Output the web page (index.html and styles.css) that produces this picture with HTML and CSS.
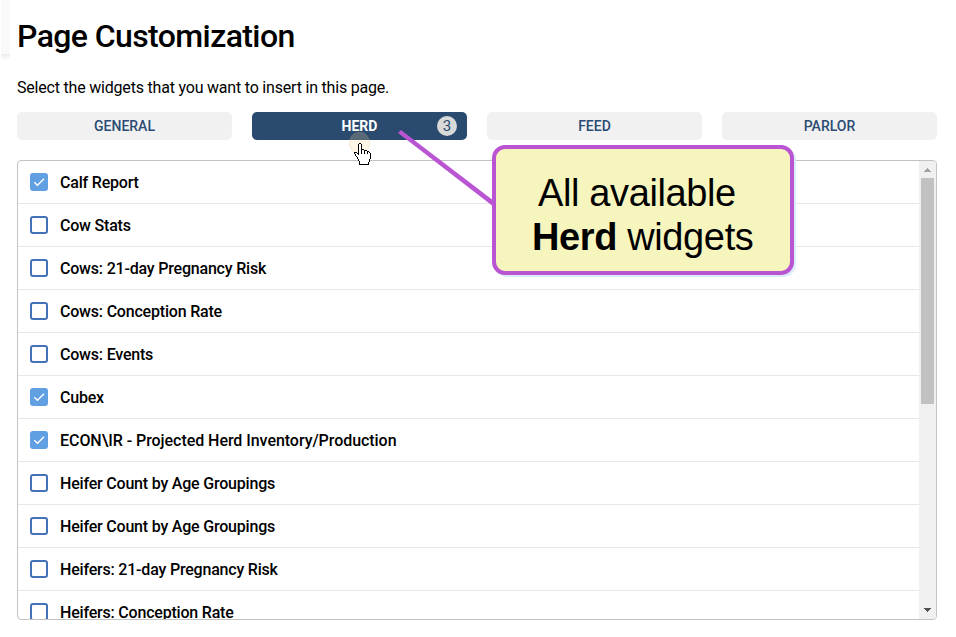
FILE: index.html
```html
<!DOCTYPE html>
<html lang="en">

<head>
  <meta charset="UTF-8" />
  <meta name="viewport" content="width=device-width, initial-scale=1.0" />
  <title>Page Customization</title>
  <link rel="stylesheet" href="styles.css">
</head>

<body>
  <div class="page-edge"></div>

  <main class="customization">
    <h1>Page Customization</h1>
    <p class="intro">Select the widgets that you want to insert in this page.</p>

    <nav class="tabs">
      <button type="button" class="tab">GENERAL</button>
      <button type="button" class="tab active">HERD<span class="count">3</span></button>
      <button type="button" class="tab">FEED</button>
      <button type="button" class="tab">PARLOR</button>
    </nav>

    <div class="widget-list">
      <div class="rows">
        <label class="row"><input type="checkbox" checked /><span>Calf Report</span></label>
        <label class="row"><input type="checkbox" /><span>Cow Stats</span></label>
        <label class="row"><input type="checkbox" /><span>Cows: 21-day Pregnancy Risk</span></label>
        <label class="row"><input type="checkbox" /><span>Cows: Conception Rate</span></label>
        <label class="row"><input type="checkbox" /><span>Cows: Events</span></label>
        <label class="row"><input type="checkbox" checked /><span>Cubex</span></label>
        <label class="row"><input type="checkbox" checked /><span class="wide">ECON\IR - Projected Herd Inventory/Production</span></label>
        <label class="row"><input type="checkbox" /><span>Heifer Count by Age Groupings</span></label>
        <label class="row"><input type="checkbox" /><span>Heifer Count by Age Groupings</span></label>
        <label class="row"><input type="checkbox" /><span>Heifers: 21-day Pregnancy Risk</span></label>
        <label class="row"><input type="checkbox" /><span>Heifers: Conception Rate</span></label>
      </div>
      <div class="scrollbar">
        <svg class="arrow up" width="7" height="4" viewBox="0 0 7 4"><path d="M3 0h1v1h1v1h1v1h1v1H0V3h1V2h1V1h1z" /></svg>
        <div class="thumb"></div>
        <svg class="arrow down" width="7" height="4" viewBox="0 0 7 4"><path d="M0 0h7v1H6v1H5v1H4v1H3V3H2V2H1V1H0z" /></svg>
      </div>
    </div>
  </main>

  <!-- callout and pointer drawn over the page -->
  <svg class="pointer-line" width="96" height="78" viewBox="0 0 96 78">
    <path d="M3 0 96 71V77L0 3z" />
  </svg>
  <div class="click-spot"></div>
  <svg class="cursor" width="18" height="23" viewBox="0 0 18 23" shape-rendering="crispEdges">
    <path fill="#fff" d="M5 1h2v6h3v1h3v1h2v1h1v6h-1v3h-1v2H6v-3H5v-2H4v-2H3v-1H2v-2H1v-2h3v2h1z" />
    <path fill="#000" d="M5 0h2v1H5zM4 1h1v11H4zM7 1h1v5H7zM8 6h2v1H8zM7 6h1v5H7zM10 7h1v4h-1zM11 7h2v1h-2zM13 8h1v3h-1zM14 8h1v1h-1zM15 9h1v1h-1zM16 10h1v6h-1zM15 16h1v3h-1zM14 19h1v3h-1zM5 21h9v1H5zM5 18h1v3H5zM4 16h1v2H4zM3 14h1v2H3zM2 13h1v1H2zM1 11h1v2H1zM0 9h1v2H0zM1 9h2v1H1zM3 10h1v1H3z" />
  </svg>
  <div class="callout">
    <div class="line-one">All available</div>
    <div class="line-two"><b>Herd</b> widgets</div>
  </div>
</body>

</html>
```
FILE: styles.css
```css
* {
  box-sizing: border-box;
}

body {
  margin: 0;
  height: 637px;
  overflow: hidden;
  position: relative;
  background-color: white;
  color: #000;
  font-family: Roboto, "Liberation Sans", sans-serif;
}

.page-edge {
  position: absolute;
  left: 1px;
  top: 0;
  width: 9px;
  height: 60px;
  background: linear-gradient(#fafafa 54px, #ececec 54px, #fff 60px);
}

.customization {
  padding: 16px 19px 0 17px;
}

h1 {
  margin: 0;
  font-size: 32px;
  line-height: 40px;
  font-weight: 500;
  letter-spacing: -0.6px;
  white-space: nowrap;
}

.intro {
  margin: 22px 0 0;
  font-size: 16px;
  line-height: 20px;
  letter-spacing: -0.2px;
}

.tabs {
  display: grid;
  grid-template-columns: repeat(4, 215px);
  gap: 20px;
  margin-top: 14px;
}

.tab {
  display: flex;
  align-items: center;
  justify-content: center;
  position: relative;
  height: 28px;
  padding: 0;
  border: none;
  border-radius: 5px;
  background-color: #f1f1f1;
  color: #2a4b73;
  font-family: inherit;
  font-size: 14px;
  font-weight: 500;
}

.tab.active {
  background-color: #2a4a70;
  color: white;
  font-weight: bold;
}

.count {
  position: absolute;
  right: 10px;
  top: 4px;
  width: 20px;
  height: 20px;
  border-radius: 50%;
  background-color: #d9d9d9;
  color: #2a4a70;
  font-size: 15px;
  font-weight: 400;
  line-height: 20px;
  text-align: center;
}

.widget-list {
  display: flex;
  width: 920px;
  height: 460px;
  margin-top: 20px;
  border: 1px solid #c2c2c2;
  border-radius: 4px;
  overflow: hidden;
}

.rows {
  flex: 1;
  overflow: hidden;
}

.row {
  display: flex;
  align-items: center;
  gap: 12px;
  height: 43px;
  padding-left: 12px;
  border-bottom: 1px solid #e8e8e8;
  font-size: 16px;
  font-weight: 500;
  letter-spacing: -0.2px;
  white-space: nowrap;
}

.row .wide {
  letter-spacing: -0.05px;
}

.row input {
  appearance: none;
  width: 18px;
  height: 18px;
  margin: 0;
  border: 2px solid #4472b8;
  border-radius: 3px;
  background-color: white;
}

.row input:checked {
  border: none;
  background: #619fe3 url("data:image/svg+xml,%3Csvg xmlns='http://www.w3.org/2000/svg' width='18' height='18'%3E%3Cpath d='M4.3 9.2 7.5 12.3 14 5.8' fill='none' stroke='white' stroke-width='1.4'/%3E%3C/svg%3E");
}

.scrollbar {
  display: flex;
  flex-direction: column;
  align-items: center;
  width: 17px;
  background-color: #f0f0f0;
}

.arrow.up {
  margin: 7px 0 6px;
  fill: #a3a3a3;
}

.thumb {
  width: 13px;
  height: 226px;
  background-color: #c1c1c1;
}

.arrow.down {
  margin-top: auto;
  margin-bottom: 7px;
  fill: #505050;
}

.pointer-line {
  position: absolute;
  left: 398px;
  top: 130px;
  fill: #b955d3;
}

.click-spot {
  position: absolute;
  left: 349px;
  top: 132px;
  width: 21px;
  height: 22px;
  border-radius: 50%;
  background-color: rgba(250, 215, 140, 0.22);
  border: 1px solid rgba(190, 170, 150, 0.15);
}

.cursor {
  position: absolute;
  left: 354px;
  top: 143px;
}

.callout {
  position: absolute;
  left: 492px;
  top: 145px;
  width: 302px;
  height: 130px;
  padding-top: 22px;
  border: 4px solid #b955d3;
  border-radius: 13px;
  background-color: #f7f5be;
  box-shadow: 2px 2px 0 #ddecfb;
  font-family: "Liberation Sans", Arial, sans-serif;
  font-size: 38px;
  line-height: 44px;
  letter-spacing: -0.38px;
  white-space: nowrap;
}

.line-one {
  padding-left: 42px;
}

.line-two {
  padding-left: 36px;
}
```
